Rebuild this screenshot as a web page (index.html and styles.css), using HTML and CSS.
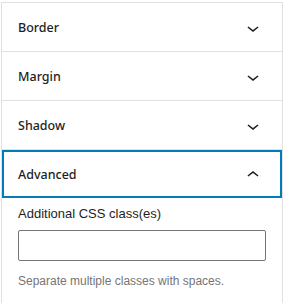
FILE: index.html
```html
<!DOCTYPE html>
<html lang="en">
<head>
  <meta charset="UTF-8">
  <meta name="viewport" content="width=device-width, initial-scale=1.0">
  <title>Block settings</title>
  <link rel="stylesheet" href="styles.css">
</head>
<body>
  <div class="sidebar">
    <div class="panel">
      <button class="panel-toggle" type="button">
        <span class="panel-title">Border</span>
        <svg class="panel-icon" viewBox="0 0 24 24" width="24" height="24"><path d="M17.5 11.6L12 16l-5.5-4.4.9-1.2L12 14l4.6-3.6 1 1.2z"/></svg>
      </button>
    </div>
    <div class="panel">
      <button class="panel-toggle" type="button">
        <span class="panel-title">Margin</span>
        <svg class="panel-icon" viewBox="0 0 24 24" width="24" height="24"><path d="M17.5 11.6L12 16l-5.5-4.4.9-1.2L12 14l4.6-3.6 1 1.2z"/></svg>
      </button>
    </div>
    <div class="panel">
      <button class="panel-toggle" type="button">
        <span class="panel-title">Shadow</span>
        <svg class="panel-icon" viewBox="0 0 24 24" width="24" height="24"><path d="M17.5 11.6L12 16l-5.5-4.4.9-1.2L12 14l4.6-3.6 1 1.2z"/></svg>
      </button>
    </div>
    <div class="panel open">
      <button class="panel-toggle focused" type="button">
        <span class="panel-title">Advanced</span>
        <svg class="panel-icon" viewBox="0 0 24 24" width="24" height="24"><path d="M6.5 12.4L12 8l5.5 4.4-.9 1.2L12 10l-4.6 3.6-1-1.2z"/></svg>
      </button>
      <div class="panel-content">
        <label class="field-label" for="cssClass">Additional CSS class(es)</label>
        <input class="field-input" id="cssClass" type="text">
        <p class="field-help">Separate multiple classes with spaces.</p>
      </div>
    </div>
  </div>
</body>
</html>
```

FILE: styles.css
```css
body {
  margin: 0;
  background: #fff;
  font-family: "Liberation Sans", Arial, sans-serif;
  color: #1e1e1e;
}
.sidebar {
  margin: 2px 0 0 1px;
  width: 282px;
  border-left: 1px solid #e0e0e0;
  border-right: 1px solid #e0e0e0;
  min-height: 301px;
  box-sizing: border-box;
}
.panel {
  border-top: 1px solid #e0e0e0;
}
.panel-toggle {
  display: flex;
  align-items: center;
  justify-content: space-between;
  width: 100%;
  height: 48px;
  padding: 1px 17px 0 16px;
  border: none;
  background: #fff;
  font: inherit;
  color: inherit;
  cursor: pointer;
  text-align: left;
}
.panel-toggle.focused {
  box-shadow: inset 0 0 0 2px #007cba;
}
.panel-title {
  font-family: "Noto Sans", sans-serif;
  font-size: 12.5px;
  font-weight: 500;
}
.panel-icon {
  fill: #1e1e1e;
}
.panel-content {
  padding: 8px 16px 16px;
}
.field-label {
  display: block;
  font-size: 13px;
  line-height: 16px;
  margin-bottom: 8px;
}
.field-input {
  display: block;
  box-sizing: border-box;
  width: 248px;
  height: 31px;
  margin: 0;
  border: 1px solid #757575;
  border-radius: 2px;
  font: inherit;
}
.field-help {
  margin: 13px 0 0;
  font-size: 12px;
  color: #757575;
}
```
